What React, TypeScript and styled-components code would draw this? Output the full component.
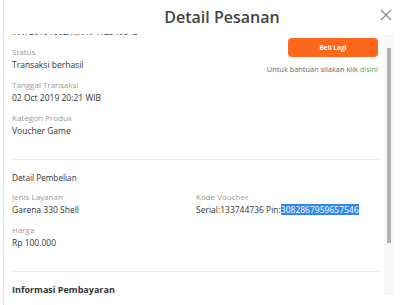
import React, { useLayoutEffect, useRef } from 'react';
import styled, { createGlobalStyle } from 'styled-components';

const GlobalStyle = createGlobalStyle`
  html, body {
    margin: 0;
    padding: 0;
    background: #fff;
    overflow: hidden;
  }
  body {
    font-family: "Open Sans", "Noto Sans", sans-serif;
    color: #333;
  }
`;

// --- Data ---
const orderInfo = [
  { label: 'No. Invoice', value: 'INV/20191002/XIX/X/412340045' },
  { label: 'Status', value: 'Transaksi berhasil' },
  { label: 'Tanggal Transaksi', value: '02 Oct 2019 20:21 WIB' },
  { label: 'Kategori Produk', value: 'Voucher Game' },
];

// --- Styled Components ---
const Modal = styled.div`
  width: 396px;
  height: 305px;
  margin-left: 3px;
  border-left: 1px solid #e2e2e2;
  background: #fff;
  display: flex;
  flex-direction: column;
`;

const Header = styled.div`
  height: 34px;
  display: flex;
  align-items: center;
  flex-shrink: 0;
`;

const Title = styled.h1`
  flex: 1;
  margin: 0;
  padding-left: 64px;
  text-align: center;
  font-size: 16px;
  font-weight: 600;
  color: #444;
  line-height: 20px;
`;

const CloseButton = styled.button`
  width: 20px;
  height: 20px;
  margin: -4px 4px 0 0;
  padding: 0;
  border: none;
  background: none;
  display: flex;
  align-items: center;
  justify-content: center;
  cursor: pointer;
`;

const Body = styled.div`
  flex: 1;
  display: flex;
  min-height: 0;
`;

const Scroller = styled.div`
  width: 380px;
  overflow-y: scroll;
  scrollbar-width: none;

  &::-webkit-scrollbar {
    display: none;
  }
`;

const ScrollTrack = styled.div`
  width: 9px;
  margin: 1px 0 10px;
  background: #f7f7f7;
`;

const ScrollThumb = styled.div`
  width: 4px;
  height: 195px;
  margin: 13px 0 0 3px;
  background: #b2b2b2;
`;

const Content = styled.div`
  padding: 0 4px 60px 8px;
`;

const TwoCols = styled.div`
  display: grid;
  grid-template-columns: 184px 1fr;
`;

const Column = styled.div<{ $offset?: number }>`
  display: flex;
  flex-direction: column;
  margin-top: ${p => p.$offset ?? 0}px;
`;

const Field = styled.div`
  margin-bottom: 7px;
`;

const Label = styled.div`
  font-size: 8px;
  line-height: 12px;
  color: #9a9a9a;
`;

const Value = styled.div`
  font-size: 8.5px;
  line-height: 14px;
  color: #333;
  white-space: nowrap;
`;

const Selected = styled.span`
  background: #3388f0;
  color: #fff;
`;

const Divider = styled.hr`
  border: none;
  border-top: 1px solid #ececec;
  margin: 14px 0 11px;
`;

const SectionTitle = styled.div<{ $bold?: boolean }>`
  font-size: ${p => (p.$bold ? '9px' : '8.2px')};
  font-weight: ${p => (p.$bold ? 700 : 500)};
  line-height: 14px;
  color: #333;
  margin-bottom: 6px;
`;

const ActionArea = styled.div`
  display: flex;
  flex-direction: column;
  align-items: flex-end;
  padding-right: 2px;
`;

const BuyButton = styled.button`
  width: 90px;
  height: 19px;
  border: none;
  border-radius: 4px;
  background: #fe661c;
  color: #fff;
  font-family: inherit;
  font-size: 6.5px;
  font-weight: 700;
  cursor: pointer;
`;

const HelpText = styled.div`
  margin-top: 6px;
  font-size: 7.4px;
  line-height: 12px;
  color: #666;
`;

const HelpLink = styled.a`
  color: #36b36f;
  text-decoration: none;
`;

export default function App() {
  const scrollRef = useRef<HTMLDivElement>(null);

  useLayoutEffect(() => {
    if (scrollRef.current) scrollRef.current.scrollTop = 21;
  }, []);

  return (
    <>
      <GlobalStyle />
      <Modal>
        <Header>
          <Title>Detail Pesanan</Title>
          <CloseButton aria-label="Tutup">
            <svg width="12" height="12" viewBox="0 0 12 12">
              <path d="M1 1L11 11M11 1L1 11" stroke="#8a8a8a" strokeWidth="1.3" fill="none" />
            </svg>
          </CloseButton>
        </Header>
        <Body>
          <Scroller ref={scrollRef}>
            <Content>
              <TwoCols>
                <Column>
                  {orderInfo.map((item, i) => (
                    <Field key={i}>
                      <Label>{item.label}</Label>
                      <Value>{item.value}</Value>
                    </Field>
                  ))}
                </Column>
                <Column $offset={25}>
                  <ActionArea>
                    <BuyButton>Beli Lagi</BuyButton>
                    <HelpText>
                      Untuk bantuan silakan klik <HelpLink href="#">disini</HelpLink>
                    </HelpText>
                  </ActionArea>
                </Column>
              </TwoCols>

              <Divider />

              <SectionTitle>Detail Pembelian</SectionTitle>
              <TwoCols>
                <Column>
                  <Field>
                    <Label>Jenis Layanan</Label>
                    <Value>Garena 330 Shell</Value>
                  </Field>
                  <Field>
                    <Label>Harga</Label>
                    <Value>Rp 100.000</Value>
                  </Field>
                </Column>
                <Column>
                  <Field>
                    <Label>Kode Voucher</Label>
                    <Value>
                      Serial:133744736 Pin:<Selected>3082867959657546</Selected>
                    </Value>
                  </Field>
                </Column>
              </TwoCols>

              <Divider />

              <SectionTitle $bold>Informasi Pembayaran</SectionTitle>
              <TwoCols>
                <Column>
                  <Field>
                    <Label>Metode Pembayaran</Label>
                    <Value>Saldo</Value>
                  </Field>
                </Column>
                <Column>
                  <Field>
                    <Label>Total Pembayaran</Label>
                    <Value>Rp 100.000</Value>
                  </Field>
                </Column>
              </TwoCols>
            </Content>
          </Scroller>
          <ScrollTrack>
            <ScrollThumb />
          </ScrollTrack>
        </Body>
      </Modal>
    </>
  );
}
